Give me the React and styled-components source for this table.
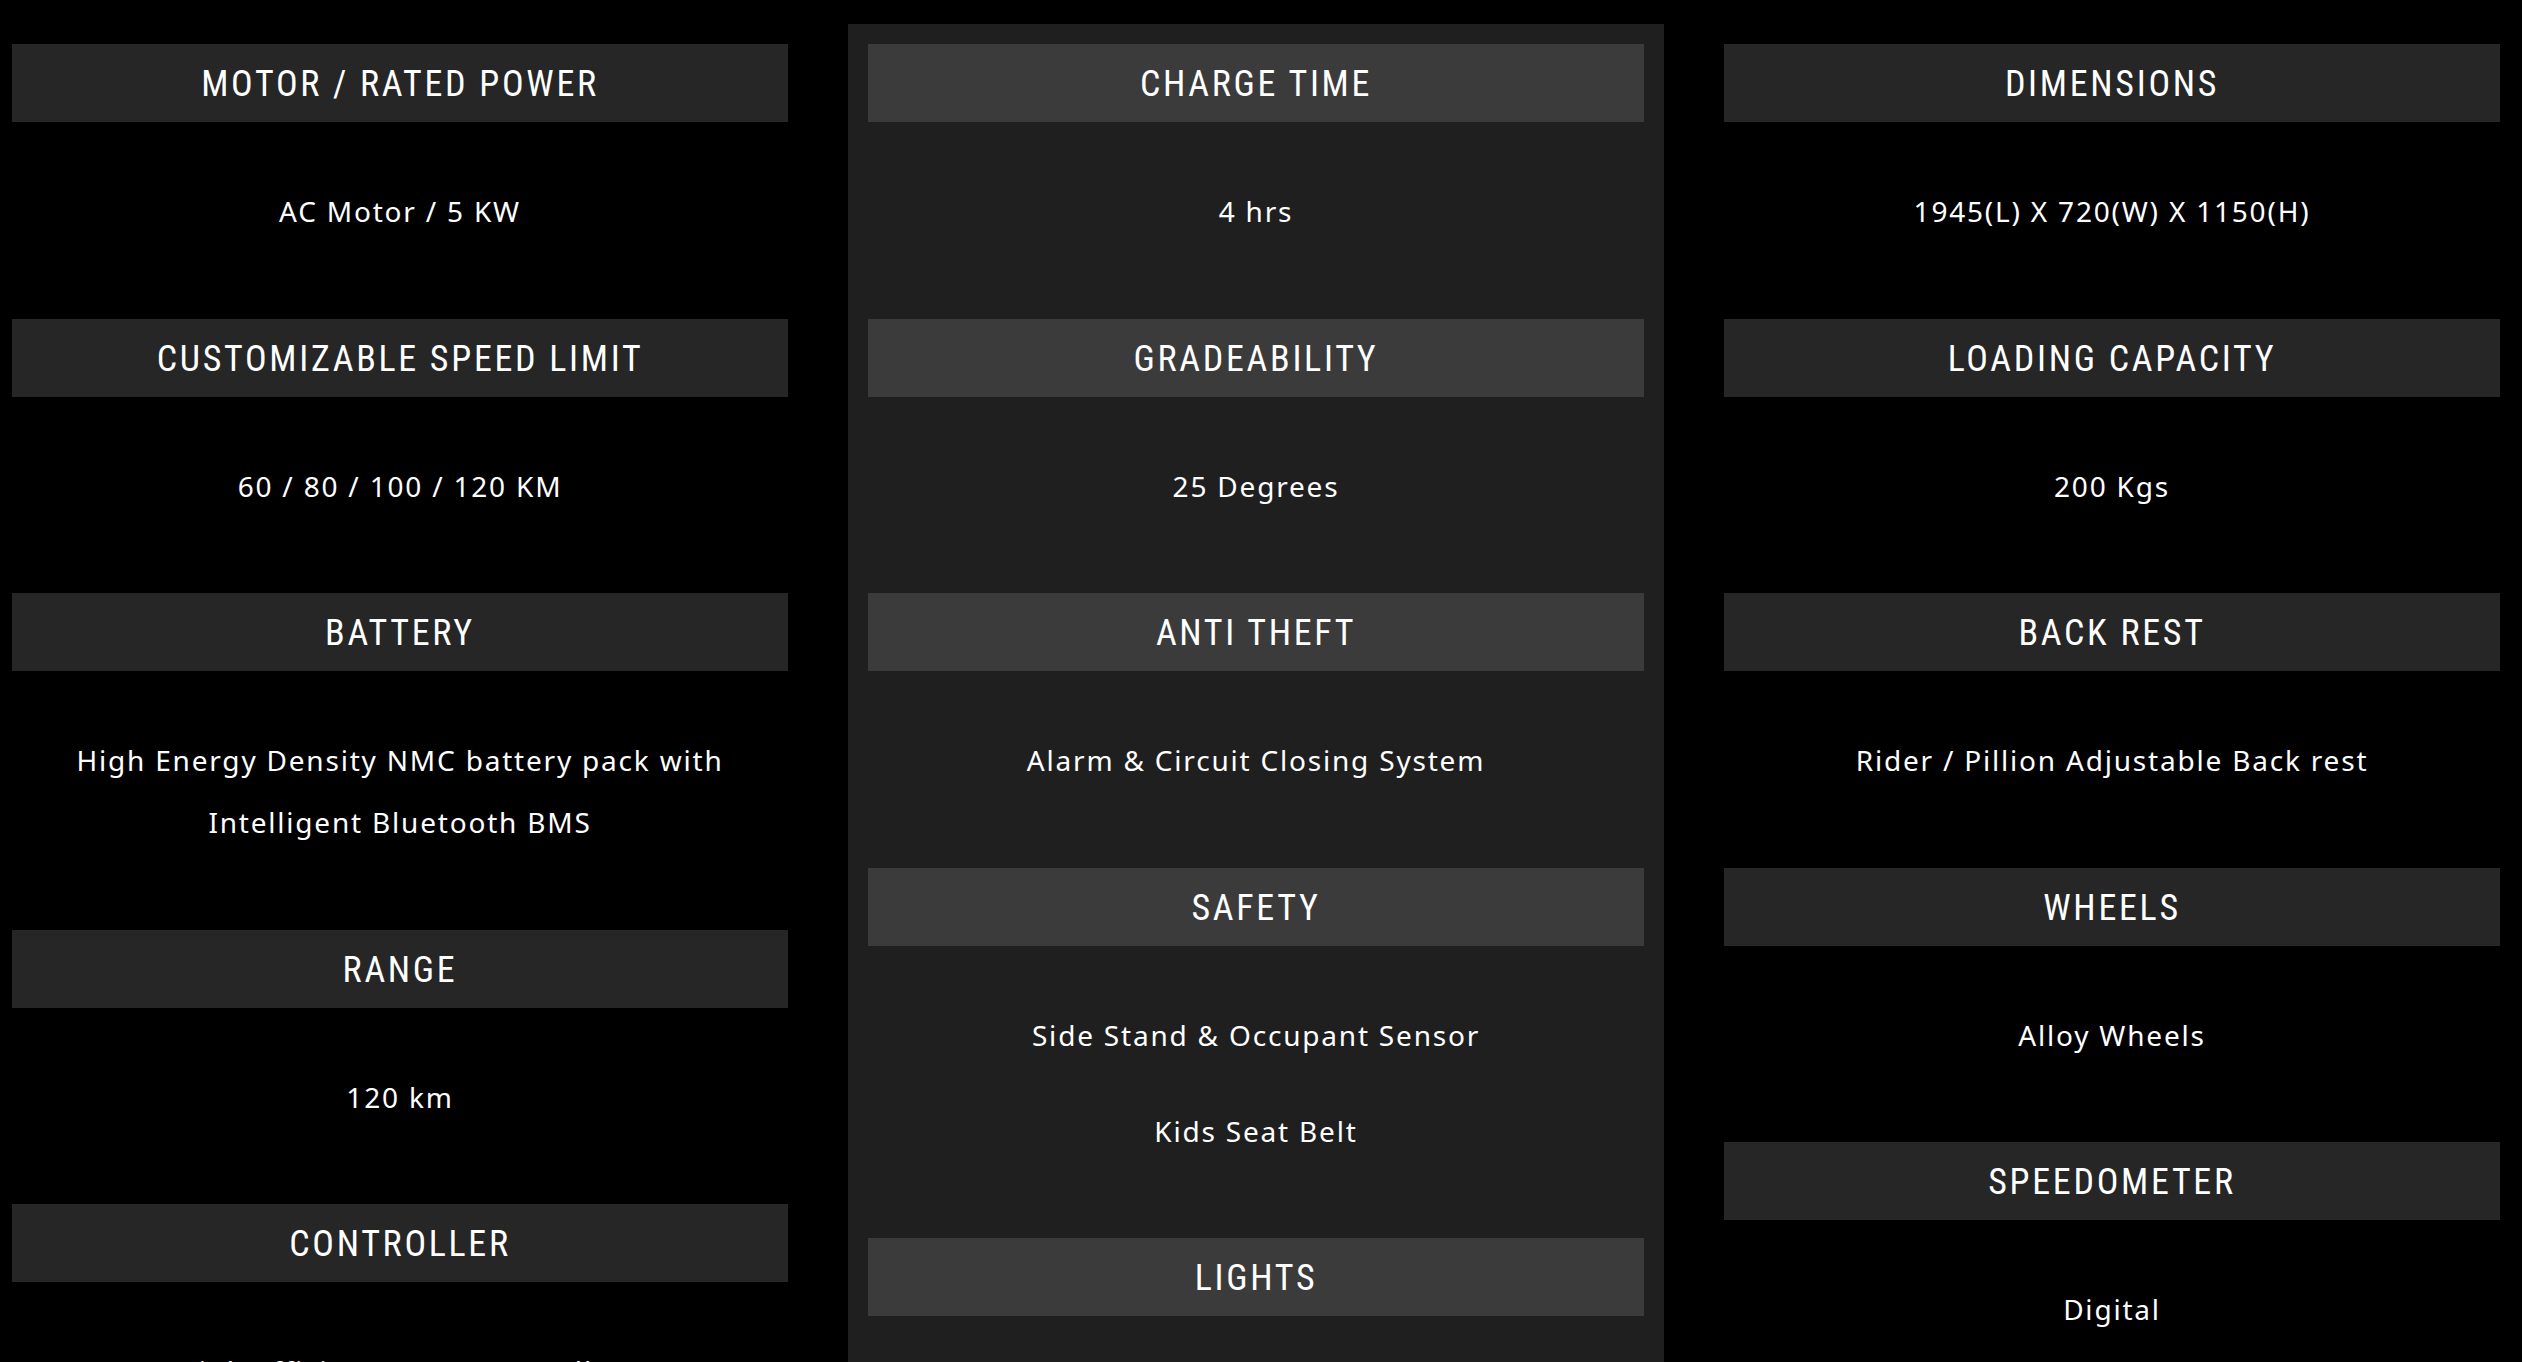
import React from 'react';
import styled, { createGlobalStyle } from 'styled-components';

const GlobalStyle = createGlobalStyle`
  html, body {
    margin: 0;
    padding: 0;
    background: #000;
    overflow: hidden;
  }
`;

const Page = styled.main`
  background: #000;
  height: 1362px;
  padding-top: 24px;
  box-sizing: border-box;
  overflow: hidden;
`;

const Grid = styled.div`
  display: grid;
  grid-template-columns: repeat(3, 816px);
  column-gap: 40px;
  margin-left: -8px;
  height: 100%;
`;

const Column = styled.section`
  padding: 20px;
  background: ${(p) => (p.$highlight ? '#1f1f1f' : 'transparent')};
  min-height: 1500px;
`;

const SpecHeader = styled.h3`
  margin: 0;
  height: 78px;
  box-sizing: border-box;
  padding-top: 2px;
  display: flex;
  align-items: center;
  justify-content: center;
  background: ${(p) => (p.$highlight ? '#3b3b3b' : '#262626')};
  font-family: "Roboto Condensed", "Liberation Sans Narrow", "DejaVu Sans Condensed", Roboto, sans-serif;
  font-size: 36px;
  font-weight: 400;
  letter-spacing: 2.7px;
  color: #fff;
  text-transform: uppercase;
`;

const SpecValues = styled.div`
  display: flex;
  flex-direction: column;
  gap: 34px;
  padding: 58px 0 76.5px;
`;

const SpecValue = styled.p`
  margin: 0;
  font-family: "Noto Sans", "Open Sans", Lato, sans-serif;
  font-size: 28px;
  line-height: 62px;
  letter-spacing: 1.8px;
  color: #fff;
  text-align: center;
`;

const columns = [
  {
    highlight: false,
    specs: [
      { title: 'Motor / Rated Power', values: ['AC Motor / 5 KW'] },
      { title: 'Customizable Speed Limit', values: ['60 / 80 / 100 / 120 KM'] },
      {
        title: 'Battery',
        values: [['High Energy Density NMC battery pack with', 'Intelligent Bluetooth BMS']],
      },
      { title: 'Range', values: ['120 km'] },
      { title: 'Controller', values: ['High Efficiency FOC Controller'] },
    ],
  },
  {
    highlight: true,
    specs: [
      { title: 'Charge Time', values: ['4 hrs'] },
      { title: 'Gradeability', values: ['25 Degrees'] },
      { title: 'Anti Theft', values: ['Alarm & Circuit Closing System'] },
      { title: 'Safety', values: ['Side Stand & Occupant Sensor', 'Kids Seat Belt'] },
      { title: 'Lights', values: ['Full LED Lighting'] },
    ],
  },
  {
    highlight: false,
    specs: [
      { title: 'Dimensions', values: ['1945(L) X 720(W) X 1150(H)'] },
      { title: 'Loading Capacity', values: ['200 Kgs'] },
      { title: 'Back Rest', values: ['Rider / Pillion Adjustable Back rest'] },
      { title: 'Wheels', values: ['Alloy Wheels'] },
      { title: 'Speedometer', values: ['Digital'] },
    ],
  },
];

function Spec({ title, values, highlight }) {
  return (
    <div>
      <SpecHeader $highlight={highlight}>{title}</SpecHeader>
      <SpecValues>
        {values.map((v, i) => (
          <SpecValue key={i}>
            {Array.isArray(v)
              ? v.map((line, j) => (
                  <React.Fragment key={j}>
                    {j > 0 && <br />}
                    {line}
                  </React.Fragment>
                ))
              : v}
          </SpecValue>
        ))}
      </SpecValues>
    </div>
  );
}

export default function App() {
  return (
    <>
      <GlobalStyle />
      <Page>
        <Grid>
          {columns.map((col, ci) => (
            <Column key={ci} $highlight={col.highlight}>
              {col.specs.map((s) => (
                <Spec key={s.title} title={s.title} values={s.values} highlight={col.highlight} />
              ))}
            </Column>
          ))}
        </Grid>
      </Page>
    </>
  );
}
